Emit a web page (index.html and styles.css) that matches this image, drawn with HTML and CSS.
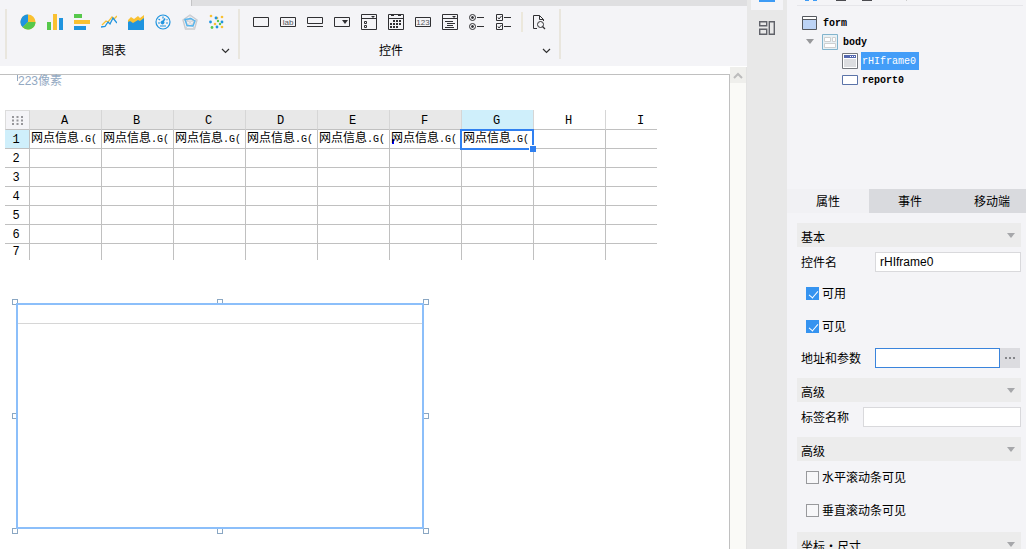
FILE: index.html
```html
<!DOCTYPE html>
<html lang="zh-CN">
<head>
<meta charset="utf-8">
<title>form</title>
<link rel="stylesheet" href="styles.css">
</head>
<body>
<div class="app">
  <main class="editor">
    <div class="tabstrip"><div class="tabstrip-active"></div></div>
    <div class="ribbon">
      <section class="group group-charts">
        <div class="tools">
          <button class="tool" aria-label="饼图"><svg viewBox="0 0 16 16"><circle cx="8" cy="8" r="7.5" fill="#f9c131"/><path d="M8 8V.5a7.500 7.500 0 0 0-5.300 12.800z" fill="#1f94df"/><path d="M8 8l-5.300 5.300A7.500 7.500 0 0 0 15.500 8z" fill="#56c84b"/></svg></button>
          <button class="tool" aria-label="柱形图"><svg viewBox="0 0 16 16"><path d="M0 8h4v8H0z" fill="#56c84b"/><path d="M6 0h4v16H6z" fill="#f9c131"/><path d="M12 4h4v12h-4z" fill="#1f94df"/></svg></button>
          <button class="tool" aria-label="条形图"><svg viewBox="0 0 16 16"><path d="M0 0h8v4H0z" fill="#56c84b"/><path d="M0 6h16v4H0z" fill="#f9c131"/><path d="M0 12h12v4H0z" fill="#1f94df"/></svg></button>
          <button class="tool" aria-label="折线图"><svg viewBox="0 0 16 16" fill="none" stroke-width="1.300"><path d="M1 11l4-4 2 1 4-5 2 2 3-3" stroke="#f9c131"/><path d="M0 13l4-.5 3-4.500 2 2 3-6 4 5" stroke="#1f94df"/></svg></button>
          <button class="tool" aria-label="面积图"><svg viewBox="0 0 16 16"><path d="M0 6l3-3 3 2 4-3 2 2 4-3v10H0z" fill="#f9c131"/><path d="M0 8l2-1 3 2 5-3 2 1 4-3v12H0z" fill="#1f94df"/></svg></button>
          <button class="tool" aria-label="仪表盘"><svg viewBox="0 0 16 16" fill="none" stroke="#1f94df"><circle cx="8" cy="8" r="7" stroke-width="1.200"/><path d="M3 9h2M3.500 5l1.500 1M8 2.500v2M12.500 5.500l-1 .5M11 9h2M5 12h6" stroke-width="1.200"/><path d="M7.500 8.500L10 4.500" stroke-width="1.500"/><circle cx="7.500" cy="8.500" r="1.500" fill="#1f94df"/></svg></button>
          <button class="tool" aria-label="雷达图"><svg viewBox="0 0 16 16" fill="none"><path d="M8 1l7 5-2.500 9h-9L1 6zM8 4.500l4 3-1.500 4h-5L4 7.500z" stroke="#c8cbd0" stroke-width="1.400"/><path d="M8 1v7M1 6l7 2 7-2M3.500 15L8 8l4.500 7" stroke="#d4d6da"/><path d="M3 5.500l6-1 4 2.500-2 5-6-.5z" stroke="#55b5ee" stroke-width="1.400"/></svg></button>
          <button class="tool" aria-label="散点图"><svg viewBox="0 0 16 16"><g fill="#f9c131"><circle cx="2" cy="2" r="1.300"/><circle cx="8" cy="4" r="1.300"/><circle cx="13" cy="3" r="1.300"/><circle cx="6" cy="10" r="1.300"/><circle cx="13" cy="13" r="1.300"/></g><g fill="#1f94df"><circle cx="1.500" cy="8" r="1.400"/><circle cx="7" cy="4" r="1.400"/><circle cx="13" cy="8" r="1.400"/><circle cx="8" cy="13" r="1.400"/></g><g fill="#56c84b"><circle cx="9" cy="7" r="1.200"/><circle cx="3" cy="13.500" r="1.400"/><circle cx="11" cy="10" r="1.200"/></g></svg></button>
        </div>
        <div class="group-foot"><span class="group-name">图表</span><button class="more" aria-label="更多图表"><svg viewBox="0 0 9 7" fill="none" stroke="#303030" stroke-width="1.200"><path d="M1 1l3.500 3.500L8 1"/></svg></button></div>
      </section>
      <section class="group group-controls">
        <div class="tools">
          <button class="tool" aria-label="文本框"><svg viewBox="0 0 16 16" fill="none" stroke="#303033"><path d="M.5 3.500h15v9H.5z"/></svg></button>
          <button class="tool" aria-label="标签"><svg viewBox="0 0 16 16" fill="none" stroke="#303033"><path d="M.5 3.500h15v9H.5z"/><text x="8" y="11" class="glyph">lab</text></svg></button>
          <button class="tool" aria-label="按钮"><svg viewBox="0 0 16 16" fill="none" stroke="#303033"><path d="M.5 3.500h15v6H.5zM0 12.500h16"/></svg></button>
          <button class="tool" aria-label="下拉框"><svg viewBox="0 0 16 16" fill="none" stroke="#303033"><path d="M.5 3.500h15v9H.5z"/><path d="M8 6h6l-3 4z" fill="#303033" stroke="none"/></svg></button>
          <button class="tool" aria-label="下拉列表"><svg viewBox="0 0 16 16" fill="none" stroke="#303033"><path d="M.5.5h15v15H.5zM0 4.500h16M3.500 7.500h2v2h-2zM3.500 11.500h2v2h-2z"/><path d="M10 2h4l-2 2z" fill="#303033" stroke="none"/></svg></button>
          <button class="tool" aria-label="日期"><svg viewBox="0 0 16 16" fill="none" stroke="#303033"><path d="M.5.5h15v15H.5zM0 4.500h16M3 1.500h3M10 1.500h3"/><path d="M5 7h9M2 10h12M2 13h9" stroke-width="2" stroke-dasharray="2 1"/></svg></button>
          <button class="tool" aria-label="数字框"><svg viewBox="0 0 16 16" fill="none" stroke="#303033"><path d="M.5 3.500h15v9H.5z"/><text x="8" y="11" class="glyph">123</text></svg></button>
          <button class="tool" aria-label="下拉树"><svg viewBox="0 0 16 16" fill="none" stroke="#303033"><path d="M.5.5h15v15H.5zM0 4.500h16M3 7.500h8M5 9.500h8M5 11.500h6M3 13.500h9"/><path d="M10 2h4l-2 2z" fill="#303033" stroke="none"/></svg></button>
          <button class="tool" aria-label="单选组"><svg viewBox="0 0 16 16" fill="none" stroke="#303033"><circle cx="3.500" cy="3.500" r="3"/><circle cx="3.500" cy="12.500" r="3"/><path d="M8 3.500h7M8 12.500h7"/><circle cx="3.500" cy="3.500" r="1" fill="#303033"/><circle cx="3.500" cy="12.500" r="1" fill="#303033"/></svg></button>
          <button class="tool" aria-label="复选组"><svg viewBox="0 0 16 16" fill="none" stroke="#303033"><path d="M.5.500h6v6h-6zM.5 9.500h6v6h-6zM8 3.500h7M8 12.500h7M2 3.500L3 5l2.500-3M2 12.500L3 14l2.500-3"/></svg></button>
          <span class="tool-sep"></span>
          <button class="tool" aria-label="查询"><svg viewBox="0 0 16 16" fill="none" stroke="#303033"><path d="M5 14.500H1.500v-13h6l4 4V7M7.500 1.500v4h4"/><circle cx="8.500" cy="10.500" r="3"/><path d="M10.500 12.500l2.500 2.500" stroke-width="1.300"/></svg></button>
        </div>
        <div class="group-foot"><span class="group-name">控件</span><button class="more" aria-label="更多控件"><svg viewBox="0 0 9 7" fill="none" stroke="#303030" stroke-width="1.200"><path d="M1 1l3.500 3.500L8 1"/></svg></button></div>
      </section>
    </div>
    <div class="workspace">
      <div class="sheet">
        <div class="ruler">223像素</div>
        <div class="grid-wrap">
          <table class="grid">
            <thead><tr>
              <th class="corner"><svg viewBox="0 0 11 9"><path d="M0 1h11M0 4.500h11M0 8h11" stroke="#96969a" stroke-width="2" stroke-dasharray="2 2.500"/></svg></th>
              <th>A</th><th>B</th><th>C</th><th>D</th><th>E</th><th>F</th><th class="current">G</th><th class="outside">H</th><th class="outside">I</th>
            </tr></thead>
            <tbody>
              <tr><th class="current">1</th><td>网点信息<span class="code">.G(</span></td><td>网点信息<span class="code">.G(</span></td><td>网点信息<span class="code">.G(</span></td><td>网点信息<span class="code">.G(</span></td><td>网点信息<span class="code">.G(</span></td><td class="flagged">网点信息<span class="code">.G(</span></td><td class="selected">网点信息<span class="code">.G(</span></td><td></td><td></td></tr>
              <tr><th>2</th><td></td><td></td><td></td><td></td><td></td><td></td><td></td><td></td><td></td></tr>
              <tr><th>3</th><td></td><td></td><td></td><td></td><td></td><td></td><td></td><td></td><td></td></tr>
              <tr><th>4</th><td></td><td></td><td></td><td></td><td></td><td></td><td></td><td></td><td></td></tr>
              <tr><th>5</th><td></td><td></td><td></td><td></td><td></td><td></td><td></td><td></td><td></td></tr>
              <tr><th>6</th><td></td><td></td><td></td><td></td><td></td><td></td><td></td><td></td><td></td></tr>
              <tr class="last"><th>7</th><td></td><td></td><td></td><td></td><td></td><td></td><td></td><td></td><td></td></tr>
            </tbody>
          </table>
        </div>
        <div class="widget">
          <i class="handle nw"></i><i class="handle n"></i><i class="handle ne"></i><i class="handle w"></i><i class="handle e"></i><i class="handle sw"></i><i class="handle s"></i><i class="handle se"></i>
          <div class="widget-body"><div class="widget-title"></div></div>
        </div>
      </div>
      <div class="scrollbar"><button class="scroll-up" aria-label="向上滚动"><svg viewBox="0 0 10 7" fill="none" stroke="#bcbcbc" stroke-width="2"><path d="M1 6l4-4 4 4"/></svg></button></div>
    </div>
  </main>
  <nav class="rail">
    <button class="rail-item active" aria-label="结构"><svg viewBox="0 0 16 2"><path d="M0 0h16v2H0z" fill="#3d9bf5"/></svg></button>
    <button class="rail-item" aria-label="组件"><svg viewBox="0 0 16 14" fill="none" stroke="#606269" stroke-width="1.400"><path d="M.7.700h7v4h-7zM.7 8.300h7v5h-7zM10.300.700h5v12.600h-5z"/></svg></button>
  </nav>
  <aside class="panel">
    <div class="panel-tools"><svg viewBox="0 0 110 2"><path d="M8 0h4v1H8zM16 0h4v1h-4z" fill="#3d9bf5"/><path d="M39 0h10v1H39zM65 0h10v1H65z" fill="#4b4b50"/><path d="M109 0h1v1h-1z" fill="#ccc"/></svg></div>
    <ul class="tree">
      <li class="node"><svg class="icon" viewBox="0 0 16 16"><path d="M.5 1.500h14v13H.5z" fill="#bcd3f5" stroke="#55585e"/><path d="M1 2h13v3H1z" fill="#fff"/><path d="M1 4.500h13" stroke="#55585e"/></svg><span class="name">form</span></li>
      <li class="node level-1"><svg class="caret" viewBox="0 0 8 5"><path d="M0 0h8L4 5z" fill="#97989b"/></svg><svg class="icon" viewBox="0 0 16 16"><path d="M.5.500h15v15H.5z" fill="#e8f1f5" stroke="#82b4cd"/><path d="M2.500 3.500h6v4h-6zM10.500 3.500h3v4h-3zM2.500 9.500h11v4h-11z" fill="#fff" stroke="#cfd0d0"/></svg><span class="name">body</span></li>
      <li class="node level-2"><svg class="icon" viewBox="0 0 16 16"><path d="M.5.500h15v15H.5z" fill="#fff" stroke="#74777d"/><path d="M2 2h12v3H2z" fill="#5568b0"/><path d="M8 3.500h5" stroke="#fff" stroke-dasharray="1 1"/><path d="M2 6h12v8H2z" fill="#dcdde0"/></svg><span class="name selected-node">rHIframe0</span></li>
      <li class="node level-2"><svg class="icon" viewBox="0 0 16 16"><path d="M.5 3.500h15v9H.5z" fill="#fff" stroke="#5a73a8"/></svg><span class="name">report0</span></li>
    </ul>
    <div class="tabs"><button class="tab open">属性</button><button class="tab">事件</button><button class="tab">移动端</button></div>
    <form class="props">
      <h3 class="section"><span>基本</span><svg class="fold" viewBox="0 0 8 5"><path d="M0 0h8L4 5z" fill="#a6a7aa"/></svg></h3>
      <div class="field"><label class="label" for="ctl">控件名</label><input class="input" id="ctl" value="rHIframe0"></div>
      <label class="check"><input type="checkbox" checked><span>可用</span></label>
      <label class="check"><input type="checkbox" checked><span>可见</span></label>
      <div class="field"><label class="label" for="addr">地址和参数</label><input class="input focus" id="addr"><button type="button" class="browse" aria-label="浏览"><svg viewBox="0 0 10 2"><path d="M0 0h2v2H0zM4 0h2v2H4zM8 0h2v2H8z" fill="#85868a"/></svg></button></div>
      <h3 class="section"><span>高级</span><svg class="fold" viewBox="0 0 8 5"><path d="M0 0h8L4 5z" fill="#a6a7aa"/></svg></h3>
      <div class="field"><label class="label narrow" for="tag">标签名称</label><input class="input" id="tag"></div>
      <h3 class="section"><span>高级</span><svg class="fold" viewBox="0 0 8 5"><path d="M0 0h8L4 5z" fill="#a6a7aa"/></svg></h3>
      <label class="check"><input type="checkbox"><span>水平滚动条可见</span></label>
      <label class="check"><input type="checkbox"><span>垂直滚动条可见</span></label>
      <h3 class="section"><span>坐标·尺寸</span><svg class="fold" viewBox="0 0 8 5"><path d="M0 0h8L4 5z" fill="#a6a7aa"/></svg></h3>
    </form>
  </aside>
</div>
</body>
</html>
```
FILE: styles.css
```css
* { box-sizing: border-box; }
body { margin: 0; font: 12px/18px "Liberation Sans", "Noto Sans CJK SC", sans-serif; color: #000; overflow: hidden; }
button { border: 0; padding: 0; margin: 0; background: none; font: inherit; color: inherit; }
svg { display: block; }
.app { display: flex; height: 100vh; background: #f4f4f7; }
.editor { flex: 1; min-width: 0; display: flex; flex-direction: column; }

.tabstrip { flex: none; height: 6px; background: #dfdfe1; }
.tabstrip-active { width: 192px; height: 6px; background: #f4f4f7; border-right: 1px solid #c4c4c6; }
.ribbon { flex: none; display: flex; height: 60px; padding: 3px 5px 7px; }
.group { border-left: 2px solid #e9e6de; display: flex; flex-direction: column; gap: 12px; padding-top: 5px; }
.group-charts { width: 233px; }
.group-controls { width: 323px; border-right: 2px solid #e9e6de; }
.tools { display: flex; gap: 11px; padding-left: 13px; }
.tool { width: 16px; height: 16px; flex: none; }
.tool svg { width: 16px; height: 16px; }
.tool-sep { width: 2px; height: 20px; margin: -2px -2px; background: #ece8dc; }
.glyph { font: 8px "Liberation Sans", sans-serif; fill: #55555a; stroke: none; text-anchor: middle; }
.group-foot { display: flex; align-items: center; height: 20px; }
.group-name { flex: 1; text-align: center; }
.more { width: 17px; display: flex; }
.more svg { width: 9px; height: 7px; }

.workspace { flex: 1; min-height: 0; display: flex; background: #fff; padding-top: 8px; }
.sheet { flex: 1; min-width: 0; padding: 0 0 0 5px; border-top: 1px solid #c0c0c0; border-right: 1px solid #c0c0c0; background: #fff; }
.ruler { height: 35px; margin-left: 12px; padding-left: 1px; line-height: 12px; color: #93a9c2; background: linear-gradient(#93a9c2, #93a9c2) 0 0 / 1px 6px no-repeat; }
.scrollbar { width: 17px; margin-top: -7px; background: #fafaf7; border-right: 1px solid #e3e3e3; }
.scroll-up { width: 16px; height: 16px; background: #efefec; display: flex; align-items: center; justify-content: center; }
.scroll-up svg { width: 10px; height: 7px; }

.grid-wrap { max-width: 652px; overflow: hidden; }
.grid { table-layout: fixed; width: 673px; border-spacing: 0; line-height: 16px; }
.grid th { height: 19px; padding: 2px 2px 0 0; font-family: "Liberation Mono", monospace; font-weight: normal; text-align: center; background: #e8e8e8; border-right: 1px solid #d6d6d6; border-bottom: 1px solid #c0c0c0; }
.grid thead th { height: 20px; padding-top: 3px; }
.grid thead .corner { width: 25px; padding: 0; background: #f4f4f7; border-top: 1px solid #dcdcdc; border-left: 1px solid #dcdcdc; }
.corner svg { width: 11px; height: 9px; margin: 0 auto; }
.grid tbody th { background: #fff; border-color: #c0c0c0; }
.grid thead .outside { background: #fff; }
.grid thead .current, .grid tbody .current { background: #cfeffb; }
.grid td { height: 19px; padding: 0 0 0 1px; border-right: 1px solid #c0c0c0; border-bottom: 1px solid #c0c0c0; white-space: nowrap; }
.code { font: 10px/16px "Liberation Mono", monospace; }
.grid .last th, .grid .last td { height: 16px; padding-top: 0; border-bottom: 0; }
.grid .selected { position: relative; }
.grid .selected::before { content: ""; position: absolute; inset: -1px -1px -2px -2px; border: 2px solid #3080f0; }
.grid .selected::after { content: ""; position: absolute; right: -3px; bottom: -4px; width: 6px; height: 6px; background: #3080f0; border: solid #fff; border-width: 1px 0 0 1px; }
.grid .flagged { background: linear-gradient(#00f, #00f) 2px 9px / 2px 5px no-repeat; }

.widget { position: relative; width: 408px; height: 226px; margin: 43px 0 0 11px; }
.widget-body { position: relative; height: 100%; border: 2px solid #8cbffa; }
.widget-title { height: 19px; border-bottom: 1px solid #d6d6d6; }
.handle { position: absolute; width: 6px; height: 6px; border: 1px solid #8aa7c3; background: #fff; }
.nw, .n, .ne { top: -4px; }
.w, .e { top: calc(50% - 3px); }
.sw, .s, .se { bottom: -5px; }
.nw, .w, .sw { left: -4px; }
.n, .s { left: calc(50% - 3px); }
.ne, .e, .se { right: -5px; }

.rail { width: 40px; flex: none; background: #e8e8e8; padding: 0 4px; display: flex; flex-direction: column; gap: 11px; }
.rail-item { width: 32px; display: flex; justify-content: center; }
.rail-item.active { height: 10px; background: #f4f4f7; align-items: flex-start; }
.rail-item svg { width: 16px; }

.panel { width: 239px; flex: none; display: flex; flex-direction: column; overflow: hidden; }
.panel-tools { flex: none; margin: 0 3px 0 10px; height: 6px; border-bottom: 1px solid #e6e6ea; }
.panel-tools svg { width: 110px; height: 2px; }
.tree { list-style: none; margin: 0; padding: 7px 0 0 15px; height: 183px; flex: none; }
.node { display: flex; align-items: center; gap: 4px; height: 19px; font: bold 10px/18px "Liberation Mono", monospace; }
.icon { width: 16px; height: 16px; }
.caret { width: 8px; height: 5px; margin-right: 4px; }
.level-1 { padding-left: 4px; }
.level-2 { padding-left: 40px; gap: 3px; }
.name { padding: 1px 1px 0; line-height: 17px; }
.selected-node { background: #439df8; color: #fff; padding-right: 3px; font-weight: normal; }

.tabs { display: flex; flex: none; overflow: hidden; }
.tab { flex: 0 0 82px; height: 24px; padding-top: 1px; background: #d9dade; text-align: center; }
.tab.open { background: #f1f1f4; }
.props { padding: 5px 5px 0 10px; }
.section { display: flex; align-items: center; justify-content: space-between; height: 24px; margin: 5px 0 0; padding: 3px 6px 0 4px; background: #ececec; font: 12px/18px "Noto Sans CJK SC", sans-serif; }
.fold { width: 8px; height: 5px; margin-top: -3px; }
.field { display: flex; align-items: center; height: 30px; }
.label { width: 78px; padding: 2px 0 0 4px; flex: none; }
.label.narrow { width: 66px; }
.input { flex: 1; min-width: 0; height: 20px; border: 1px solid #d9d9dc; background: #fff; padding: 0 4px; font: inherit; outline: 0; }
.input.focus { border-color: #3a84dc; }
.browse { width: 20px; height: 20px; margin-right: 1px; background: #dcdce0; display: flex; align-items: center; justify-content: center; }
.browse svg { width: 10px; height: 2px; }
.check { display: flex; align-items: center; gap: 3px; height: 33px; padding-left: 9px; }
.check span { padding-top: 1px; }
.check input { appearance: none; width: 13px; height: 13px; margin: 0; border: 1px solid #98999c; background: #f7f7f9; }
.check input:checked { position: relative; background: #3593f0; border-color: #3593f0; }
.check input:checked::after { content: ""; position: absolute; left: 4px; top: 1px; width: 4px; height: 8px; border: solid #fff; border-width: 0 1px 1px 0; transform: rotate(40deg); }
```
